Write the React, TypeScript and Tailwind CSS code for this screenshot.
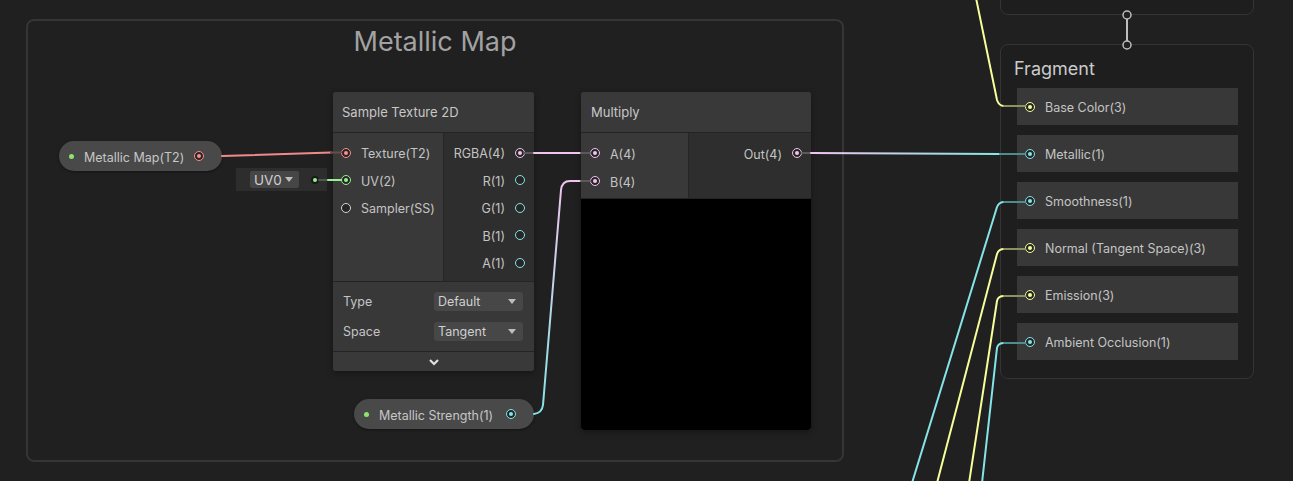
import React from "react";

type PT = "tex" | "v2" | "v4" | "f" | "v3" | "ss";

const PORT: Record<PT, { ring: string; dot: string }> = {
  tex: { ring: "border-[#ff8b8b]", dot: "bg-[#ff8b8b]" },
  v2: { ring: "border-[#9aef92]", dot: "bg-[#9aef92]" },
  v4: { ring: "border-[#f0c4ee]", dot: "bg-[#f0c4ee]" },
  f: { ring: "border-[#84e4e7]", dot: "bg-[#84e4e7]" },
  v3: { ring: "border-[#f6ff9a]", dot: "bg-[#f6ff9a]" },
  ss: { ring: "border-[#d4d4d4]", dot: "bg-[#d4d4d4]" },
};

function Port({ t, on }: { t: PT; on?: boolean }) {
  return (
    <span
      className={`w-[10px] h-[10px] shrink-0 rounded-full border-[1.5px] bg-[#262626] flex items-center justify-center ${PORT[t].ring}`}
    >
      {on && <span className={`w-[4px] h-[4px] rounded-full ${PORT[t].dot}`} />}
    </span>
  );
}

function Tri() {
  return (
    <svg width="8" height="5" viewBox="0 0 8 5">
      <polygon points="0,0 8,0 4,5" fill="#bdbdbd" />
    </svg>
  );
}

function InRow({ t, on, label, h }: { t: PT; on?: boolean; label: string; h: string }) {
  return (
    <div className={`${h} flex items-center gap-[10px]`}>
      <Port t={t} on={on} />
      <span className="translate-y-[2px]">{label}</span>
    </div>
  );
}

function OutRow({ t, on, label, h }: { t: PT; on?: boolean; label: string; h: string }) {
  return (
    <div className={`${h} flex items-center justify-end gap-[10px]`}>
      <span className="translate-y-[2px]">{label}</span>
      <Port t={t} on={on} />
    </div>
  );
}

function Dropdown({ value }: { value: string }) {
  return (
    <div className="w-[89px] h-[19px] rounded-[3px] bg-[#474747] flex items-center justify-between pl-[4px] pr-[7px] text-[#cfcfcf]">
      <span className="translate-y-[1px]">{value}</span>
      <Tri />
    </div>
  );
}

function SampleTexture() {
  return (
    <div className="absolute left-[333px] top-[92px] w-[201px] flex flex-col rounded-[3px] overflow-hidden bg-[#2e2e2e] text-[12.5px] text-[#c4c4c4] shadow-[0_2px_6px_rgba(0,0,0,0.35)]">
      <div className="h-[41px] bg-[#393939] border-b border-[#242424] flex items-center pl-[9px] text-[13px] text-[#c8c8c8]">
        <span className="translate-y-[1px]">Sample Texture 2D</span>
      </div>
      <div className="flex h-[148px]">
        <div className="w-[111px] bg-[#393939] border-r border-[#262626] pt-[6px] pl-[8px] flex flex-col">
          <InRow t="tex" on label="Texture(T2)" h="h-[27.5px]" />
          <InRow t="v2" on label="UV(2)" h="h-[27.5px]" />
          <InRow t="ss" label="Sampler(SS)" h="h-[27.5px]" />
        </div>
        <div className="flex-1 bg-[#2e2e2e] pt-[6px] pr-[9px] flex flex-col">
          <OutRow t="v4" on label="RGBA(4)" h="h-[27.5px]" />
          <OutRow t="f" label="R(1)" h="h-[27.5px]" />
          <OutRow t="f" label="G(1)" h="h-[27.5px]" />
          <OutRow t="f" label="B(1)" h="h-[27.5px]" />
          <OutRow t="f" label="A(1)" h="h-[27.5px]" />
        </div>
      </div>
      <div className="h-[70px] border-t border-[#242424] bg-[#383838] pt-[4px] pl-[10px] pr-[11px] flex flex-col">
        <div className="h-[30px] flex items-center justify-between">
          <span className="translate-y-[1px]">Type</span>
          <Dropdown value="Default" />
        </div>
        <div className="h-[30px] flex items-center justify-between">
          <span className="translate-y-[1px]">Space</span>
          <Dropdown value="Tangent" />
        </div>
      </div>
      <div className="h-[20px] border-t border-[#242424] bg-[#393939] flex items-center justify-center">
        <svg width="12" height="8" viewBox="0 0 12 8">
          <polyline points="2,2 6,6 10,2" fill="none" stroke="#e0e0e0" strokeWidth="2.2" />
        </svg>
      </div>
    </div>
  );
}

function Multiply() {
  return (
    <div className="absolute left-[581px] top-[92px] w-[230px] h-[338px] flex flex-col rounded-[3px] overflow-hidden bg-[#2e2e2e] text-[12.5px] text-[#c4c4c4] shadow-[0_2px_6px_rgba(0,0,0,0.35)]">
      <div className="h-[41px] shrink-0 bg-[#393939] border-b border-[#242424] flex items-center pl-[10px] text-[13px] text-[#c8c8c8]">
        <span className="translate-y-[1px]">Multiply</span>
      </div>
      <div className="flex h-[66px] shrink-0 border-b border-[#242424]">
        <div className="w-[108px] bg-[#393939] border-r border-[#262626] pt-[6px] pl-[9px] flex flex-col">
          <InRow t="v4" on label="A(4)" h="h-[28px]" />
          <InRow t="v4" on label="B(4)" h="h-[28px]" />
        </div>
        <div className="flex-1 bg-[#2e2e2e] pt-[6px] pr-[9px] flex flex-col">
          <OutRow t="v4" on label="Out(4)" h="h-[28px]" />
        </div>
      </div>
      <div className="flex-1 bg-black rounded-b-[3px]" />
    </div>
  );
}

function Pill({
  left,
  label,
  t,
}: {
  left: string;
  label: string;
  t: PT;
}) {
  return (
    <div
      className={`absolute ${left} h-[30px] rounded-full bg-[#494949] flex items-center pl-[10px] pr-[18px] text-[12.5px] text-[#c6c6c6] shadow-[0_1px_3px_rgba(0,0,0,0.4)]`}
    >
      <span className="w-[5px] h-[5px] rounded-full bg-[#8fe36f] shrink-0" />
      <span className="ml-[10px] translate-y-[2px]">{label}</span>
      <span className="ml-auto">
        <Port t={t} on />
      </span>
    </div>
  );
}

const FRAG: { t: PT; label: string }[] = [
  { t: "v3", label: "Base Color(3)" },
  { t: "f", label: "Metallic(1)" },
  { t: "f", label: "Smoothness(1)" },
  { t: "v3", label: "Normal (Tangent Space)(3)" },
  { t: "v3", label: "Emission(3)" },
  { t: "f", label: "Ambient Occlusion(1)" },
];

function Fragment() {
  return (
    <div className="absolute left-[1000px] top-[44px] w-[254px] h-[335px] rounded-[8px] border border-[#343434] bg-[#1e1e1e] flex flex-col">
      <div className="h-[43px] flex items-center pl-[13px] text-[18px] text-[#cbcbcb]">
        <span className="translate-y-[2px]">Fragment</span>
      </div>
      <div className="flex flex-col gap-[10px] pl-[16px] pr-[15px]">
        {FRAG.map((r) => (
          <div
            key={r.label}
            className="h-[37px] bg-[#383838] flex items-center pl-[8px] gap-[10px] text-[12.5px] text-[#c4c4c4]"
          >
            <Port t={r.t} on />
            <span className="translate-y-[2px]">{r.label}</span>
          </div>
        ))}
      </div>
    </div>
  );
}

function Wires() {
  const pink = "#f0c4ee";
  const cyan = "#84e4e7";
  const yellow = "#f6ff9a";
  const stub = "#5a5a5a";
  const dimY = "#8e9160";
  const dimC = "#4f8c8e";
  return (
    <svg
      className="absolute left-0 top-0 pointer-events-none"
      width="1293"
      height="481"
      viewBox="0 0 1293 481"
    >
      <defs>
        <linearGradient id="gOut" gradientUnits="userSpaceOnUse" x1="811" y1="0" x2="1000" y2="0">
          <stop offset="0" stopColor={pink} />
          <stop offset="1" stopColor={cyan} />
        </linearGradient>
        <linearGradient id="gB" gradientUnits="userSpaceOnUse" x1="0" y1="414" x2="0" y2="181">
          <stop offset="0" stopColor={cyan} />
          <stop offset="1" stopColor={pink} />
        </linearGradient>
      </defs>
      <g fill="none" strokeWidth="2" strokeLinecap="round">
        <path d="M222 156 L331 152.5" stroke="#f08a8a" />
        <path d="M331 152.5 L341 152.5" stroke="#6a4c4c" />
        <path d="M319 180 L328 180" stroke="#4b5a4a" />
        <path d="M328 180 L341 180" stroke="#9aef92" />
        <path d="M524 153 L534 153" stroke={stub} />
        <path d="M534 153 L581 153" stroke={pink} />
        <path d="M581 153 L590 153" stroke={stub} />
        <path d="M534 414 Q542 413 543 405 L561 190 Q562 181 570 181 L581 181" stroke="url(#gB)" />
        <path d="M581 181 L590 181" stroke={stub} />
        <path d="M802 153 L811 153" stroke={stub} />
        <path d="M811 153 L1000 154" stroke="url(#gOut)" />
        <path d="M1000 154 L1025 154" stroke={dimC} />
        <path d="M976 -2 L997 100 Q999 106 1004 106" stroke={yellow} />
        <path d="M1004 106 L1025 106" stroke={dimY} />
        <path d="M912 483 L997 207 Q999 202 1004 202" stroke={cyan} />
        <path d="M1004 202 L1025 202" stroke={dimC} />
        <path d="M937 483 L997 254 Q998.5 249 1004 249" stroke={yellow} />
        <path d="M1004 249 L1025 249" stroke={dimY} />
        <path d="M969 483 L997 301 Q998 296 1004 296" stroke={yellow} />
        <path d="M1004 296 L1025 296" stroke={dimY} />
        <path d="M982 483 L997 348 Q998 343 1004 343" stroke={cyan} />
        <path d="M1004 343 L1025 343" stroke={dimC} />
      </g>
      <line x1="1127" y1="19" x2="1127" y2="41" stroke="#bdbdbd" strokeWidth="2" />
      <circle cx="1127" cy="15" r="4" fill="#202020" stroke="#bdbdbd" strokeWidth="1.5" />
      <circle cx="1127" cy="45" r="4" fill="#202020" stroke="#bdbdbd" strokeWidth="1.5" />
    </svg>
  );
}

export default function App() {
  return (
    <div className="relative w-[1293px] h-[481px] overflow-hidden bg-[#202020] font-['Inter',sans-serif]">
      <div className="absolute left-[26px] top-[19px] w-[818px] h-[443px] rounded-[8px] border-2 border-[#353535]">
        <div className="pt-[4px] text-center text-[27px] leading-[34px] text-[#a2a2a2]">Metallic Map</div>
      </div>

      <div className="absolute left-[1000px] top-[-30px] w-[254px] h-[45px] rounded-[8px] border border-[#343434] bg-[#1e1e1e]" />
      <Fragment />

      <Pill left="left-[59px] top-[141px] w-[163px]" label="Metallic Map(T2)" t="tex" />
      <Pill left="left-[354px] top-[399px] w-[180px]" label="Metallic Strength(1)" t="f" />

      <div className="absolute left-[236px] top-[168px] w-[91px] h-[23px] bg-[#2d2d2d] flex items-center pl-[14px] pr-[8px]">
        <div className="w-[49px] h-[17px] rounded-[2px] bg-[#464646] flex items-center justify-between pl-[4px] pr-[6px] text-[13.5px] text-[#cfcfcf]">
          <span className="translate-y-[1px]">UV0</span>
          <Tri />
        </div>
        <span className="ml-auto w-[8px] h-[8px] rounded-full bg-[#1a1a1a] flex items-center justify-center">
          <span className="w-[4px] h-[4px] rounded-full bg-[#9aef92]" />
        </span>
      </div>

      <SampleTexture />
      <Multiply />
      <Wires />
    </div>
  );
}
